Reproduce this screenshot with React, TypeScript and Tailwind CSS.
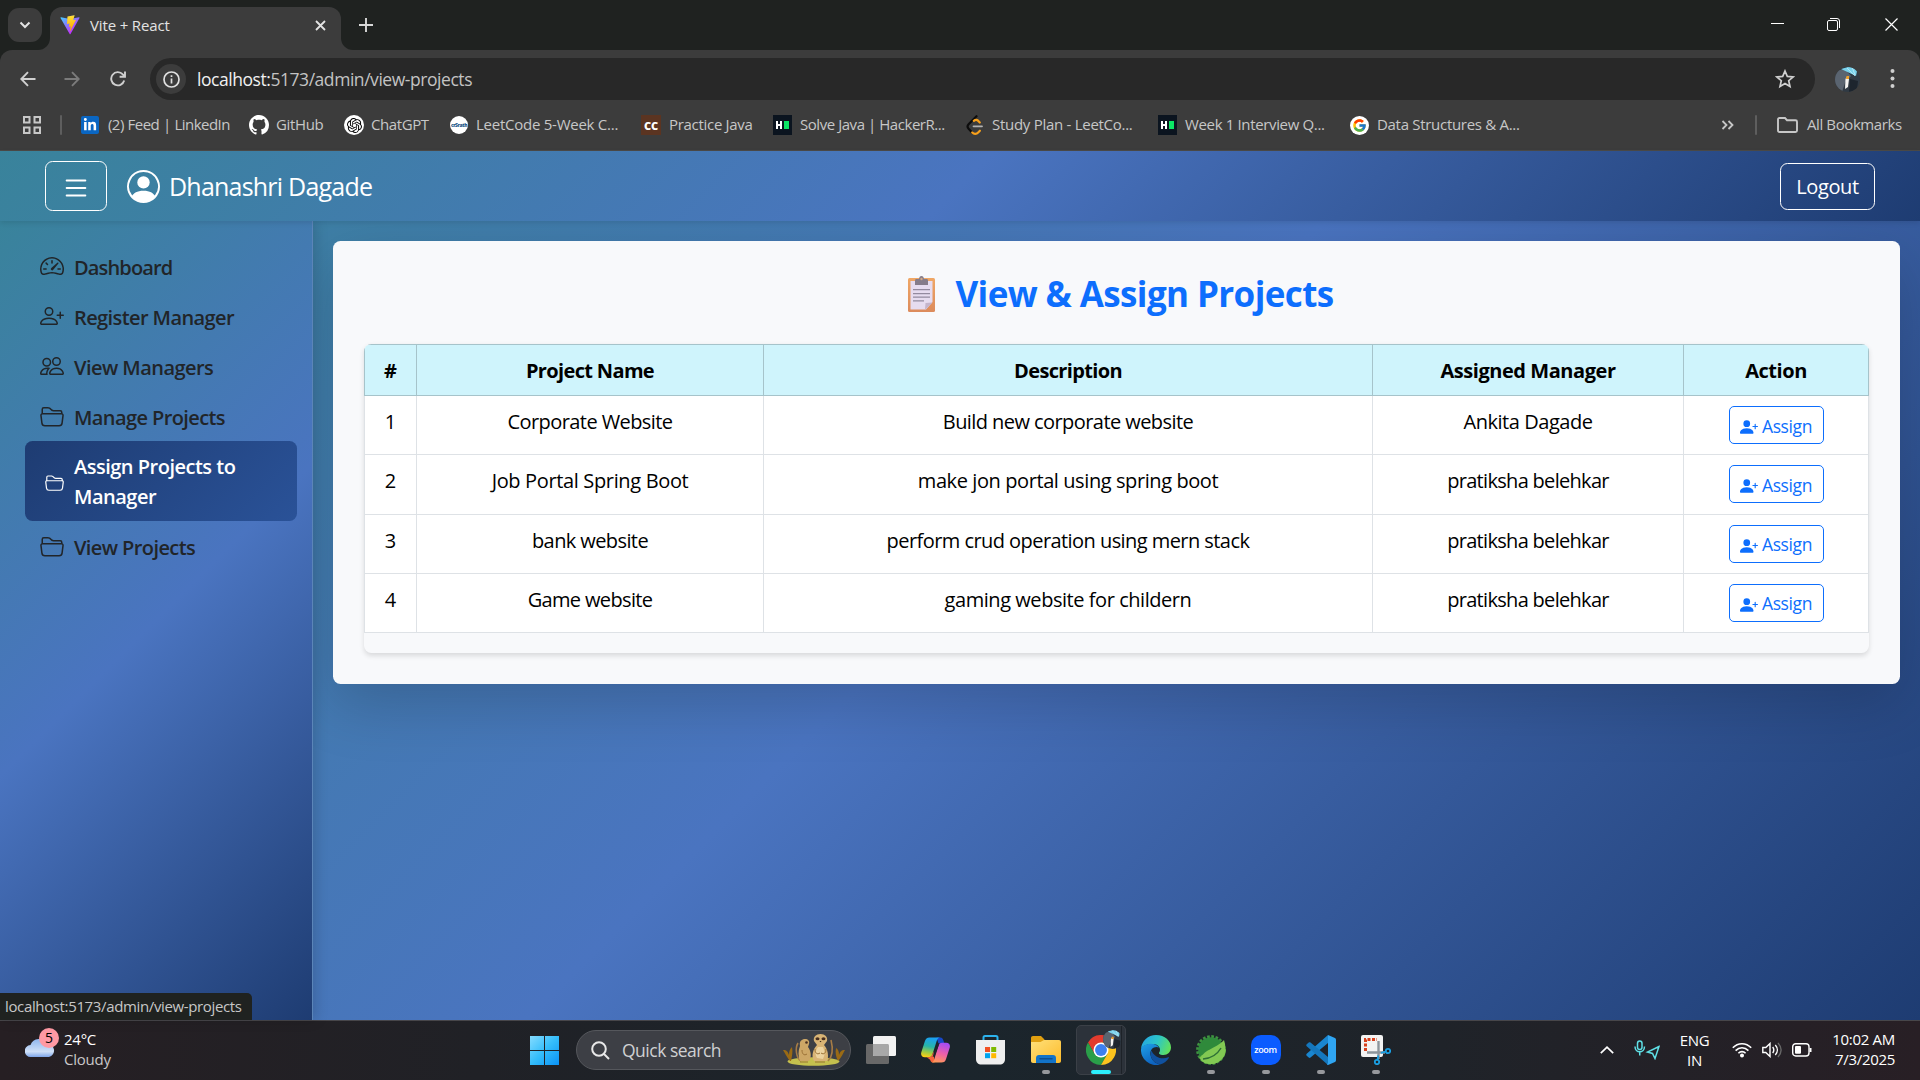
import React from "react";
import {
  BsFolder2Open,
  BsGithub,
  BsList,
  BsPeople,
  BsPersonCircle,
  BsPersonPlus,
  BsPersonPlusFill,
  BsSpeedometer2,
} from "react-icons/bs";
import { SiOpenai } from "react-icons/si";
import { FcGoogle } from "react-icons/fc";
import { FaLinkedinIn } from "react-icons/fa";

/* ---------- Browser chrome ---------- */

function ViteLogo() {
  return (
    <svg viewBox="0 0 410 404" className="h-5 w-5 shrink-0">
      <defs>
        <linearGradient id="va" x1="6" y1="33" x2="235" y2="344" gradientUnits="userSpaceOnUse">
          <stop stopColor="#41D1FF" />
          <stop offset="1" stopColor="#BD34FE" />
        </linearGradient>
        <linearGradient id="vb" x1="194" y1="9" x2="236" y2="293" gradientUnits="userSpaceOnUse">
          <stop stopColor="#FFEA83" />
          <stop offset=".08" stopColor="#FFDD35" />
          <stop offset="1" stopColor="#FFA800" />
        </linearGradient>
      </defs>
      <path fill="url(#va)" d="M399.6 59.5 215.6 388.5c-3.8 6.8-13.5 6.8-17.3.1L10.6 59.6c-4.1-7.3 2-16.1 10.3-14.6l184.2 32.9c1.2.2 2.4.2 3.5 0l180.3-32.8c8.2-1.5 14.5 7.2 10.7 14.4z" />
      <path fill="url(#vb)" d="M293 1.6 156.800 28.300c-2.200.4-3.900 2.300-4 4.600l-8.400 141.400c-.2 3.300 2.900 5.900 6.100 5.200l37.900-8.700c3.500-.8 6.700 2.300 6 5.900l-11.300 55.100c-.8 3.700 2.700 6.900 6.300 5.800l23.400-7.100c3.600-1.100 7.100 2.100 6.300 5.800l-17.900 86.600c-1.100 5.400 6.100 8.400 9.100 3.700l2-3.100 110.900-221.400c1.900-3.700-1.300-7.900-5.400-7.100l-39 7.500c-3.700.7-6.800-2.700-5.800-6.300L298.700 7.900C299.700 4.300 296.600.9 293 1.600z" />
    </svg>
  );
}

function Avatar({ className }: { className: string }) {
  return (
    <svg viewBox="0 0 25 25" className={className}>
      <defs>
        <clipPath id="avc">
          <circle cx="12.500" cy="12.500" r="12.500" />
        </clipPath>
      </defs>
      <g clipPath="url(#avc)">
        <rect width="25" height="25" fill="#303a44" />
        <path d="M0 4 10 2l6 7-6 7-3 9H0z" fill="#5a6470" />
        <path d="M6 2 13 0h7l2 4-1 5z" fill="#79d2ec" />
        <path d="m12 1 8 8M17 0l3 8" stroke="#c8f0fa" strokeWidth=".7" />
        <path d="m15 12 8 2-1 9-8 2z" fill="#1d252e" />
        <path d="M10.500 12c1-2.500 2.500-2.500 3.500 0l-1 8-3 2z" fill="#f4f4f2" />
        <path d="M11.500 9h2.500v3h-3z" fill="#efa12a" />
      </g>
    </svg>
  );
}

function HackerRank() {
  return (
    <span className="flex h-5 w-[19px] items-center justify-center bg-[#0b141f]">
      <svg viewBox="0 0 14 8" className="h-2 w-3.5">
        <path d="M1 0v8M5 0v8M1 4h4" stroke="#fff" strokeWidth="2" />
        <rect x="8" width="5" height="8" fill="#0be564" />
      </svg>
    </span>
  );
}

function LeetCode() {
  return (
    <svg viewBox="0 0 18 20" className="h-5 w-[18px]" fill="none" strokeWidth="2.200" strokeLinecap="round">
      <path d="M10.500 1.200 2.600 9.300c-1.300 1.400-1.300 3.100 0 4.500l3.500 3.700" stroke="#0c0c0c" />
      <path d="M7.800 5.800c1.500-1.300 3.200-1.200 4.500.1l1.500 1.600M6.200 17.500c1.900 1.800 4.300 1.700 6-.1l1.700-1.700" stroke="#f9a11b" />
      <path d="M7.500 11.300H16" stroke="#b3b3b3" strokeWidth="1.800" />
    </svg>
  );
}

const bookmarks: { label: string; slot: string; text: string; icon: React.ReactNode }[] = [
  {
    label: "(2) Feed | LinkedIn",
    slot: "w-[168px]",
    text: "-ml-px tracking-[-0.55px] [word-spacing:0.5px]",
    icon: (
      <span className="flex h-[18px] w-[18px] items-center justify-center rounded-[2px] bg-[#0a66c2] text-white">
        <FaLinkedinIn size={14} />
      </span>
    ),
  },
  { label: "GitHub", slot: "w-[95px]", text: "-ml-px tracking-[-0.35px]", icon: <BsGithub size={20} color="#fff" /> },
  {
    label: "ChatGPT",
    slot: "w-[105px]",
    text: "-ml-px tracking-[-0.4px]",
    icon: (
      <span className="flex h-5 w-5 items-center justify-center rounded-full bg-white text-black">
        <SiOpenai size={15} />
      </span>
    ),
  },
  {
    label: "LeetCode 5-Week C...",
    slot: "w-[192px]",
    text: "-ml-px tracking-[-0.25px]",
    icon: (
      <span className="ml-px flex h-[18px] w-[18px] items-center justify-center overflow-hidden rounded-full bg-white">
        <span className="text-[5px] leading-none font-extrabold tracking-[-0.4px] text-[#1b5488]">crSrath</span>
      </span>
    ),
  },
  {
    label: "Practice Java",
    slot: "w-[132px]",
    text: "tracking-[-0.3px]",
    icon: (
      <span className="flex h-5 w-5 items-center justify-center bg-[#5b3421]">
        <span className="text-[11px] leading-none font-extrabold tracking-[-0.2px] text-white">CC</span>
      </span>
    ),
  },
  { label: "Solve Java | HackerR...", slot: "w-[193px]", text: "-ml-px tracking-[-0.45px]", icon: <HackerRank /> },
  { label: "Study Plan - LeetCo...", slot: "w-[192px]", text: "-ml-[2px] tracking-[-0.28px]", icon: <LeetCode /> },
  { label: "Week 1 Interview Q...", slot: "w-[192px]", text: "-ml-px tracking-[-0.35px]", icon: <HackerRank /> },
  {
    label: "Data Structures & A...",
    slot: "w-[190px]",
    text: "-ml-px tracking-[-0.3px]",
    icon: (
      <span className="flex h-[19px] w-[19px] items-center justify-center rounded-full bg-white">
        <FcGoogle size={15} />
      </span>
    ),
  },
];

function Chrome() {
  return (
    <header className="flex h-[151px] shrink-0 flex-col border-b border-[#4b4a48] bg-[#3c3c3c]">
      <div className="flex h-[50px] bg-[#3c3c3c]">
        <div className="flex h-[50px] w-[50px] items-center rounded-br-xl bg-[#1f2220] pl-2">
          <span className="flex h-[34px] w-[34px] items-center justify-center rounded-[11px] bg-[#3c3c3c]">
            <svg viewBox="0 0 12 8" className="h-2 w-3" fill="none" stroke="#e3e3e3" strokeWidth="2">
              <path d="m1.500 1.500 4.500 4.500 4.500-4.500" />
            </svg>
          </span>
        </div>
        <div className="flex w-[291px] bg-[#1f2220] pt-[7px]">
          <div className="flex h-[43px] w-full items-center rounded-t-xl bg-[#3c3c3c] pr-[15px] pb-[7px] pl-2.5">
            <ViteLogo />
            <span className="ml-2.5 flex-1 text-[15px] tracking-[-0.15px] text-[#e3e3e3]">Vite + React</span>
            <svg viewBox="0 0 11 11" className="h-[11px] w-[11px]" stroke="#e3e3e3" strokeWidth="1.800">
              <path d="m1 1 9 9M10 1l-9 9" />
            </svg>
          </div>
        </div>
        <div className="flex flex-1 items-center rounded-bl-xl bg-[#1f2220] pr-[22px] pb-[1px] pl-[18px]">
          <svg viewBox="0 0 14 14" className="h-3.5 w-3.5" stroke="#d8d8d8" strokeWidth="1.900">
            <path d="M7 0v14M0 7h14" />
          </svg>
          <div className="ml-auto flex items-center">
            <svg viewBox="0 0 13 13" className="h-[13px] w-[13px]">
              <path d="M0 5.500h13" stroke="#fff" />
            </svg>
            <svg viewBox="0 0 13 13" className="mr-[45px] ml-[43px] h-[13px] w-[13px]" fill="none" stroke="#fff">
              <rect x=".5" y="2.500" width="10" height="10" rx="1.500" />
              <path d="M3 .5h7a2.500 2.500 0 0 1 2.500 2.500v7" />
            </svg>
            <svg viewBox="0 0 13 13" className="h-[13px] w-[13px]" stroke="#fff" strokeWidth="1.200">
              <path d="m.5.5 12 12M12.500.5l-12 12" />
            </svg>
          </div>
        </div>
      </div>

      <div className="bg-[#1f2220]">
        <div className="flex h-[58px] items-center rounded-t-xl bg-[#3c3c3c] pr-[22px] pl-5">
          <svg viewBox="0 0 16 16" className="h-4 w-4" fill="none" stroke="#d0d0d0" strokeWidth="1.900">
            <path d="M15.500 8H1.500M8 1.200 1.300 8 8 14.800" />
          </svg>
          <svg viewBox="0 0 16 16" className="ml-[28px] h-4 w-4" fill="none" stroke="#7b7b7b" strokeWidth="1.900">
            <path d="M.5 8h14M8 1.200 14.700 8 8 14.800" />
          </svg>
          <svg viewBox="0 0 16 16" className="ml-[30px] h-4 w-4" fill="none" stroke="#d0d0d0" strokeWidth="1.900">
            <path d="M14.200 9.500A6.600 6.600 0 1 1 12.800 3.400L14.800 5.500M15 .5v5.200H9.600" />
          </svg>
          <div className="ml-[24px] flex h-[42px] w-[1665px] items-center rounded-full bg-[#282828] pr-[20px] pl-[6px]">
            <span className="flex h-[30px] w-[30px] items-center justify-center rounded-full bg-[#3c3c3c]">
              <svg viewBox="0 0 17 17" className="h-[17px] w-[17px]" fill="none" stroke="#e0e0e0" strokeWidth="1.700">
                <circle cx="8.500" cy="8.500" r="7.500" />
                <path d="M8.500 7.500v5M8.500 4.300v1.800" />
              </svg>
            </span>
            <span className="ml-[11px] text-[17.5px] tracking-[-0.45px] text-[#c3c3c3]">
              <span className="text-[#f1f1f1]">localhost:</span>5173/admin/view-projects
            </span>
            <svg viewBox="0 0 20 20" className="ml-auto h-5 w-5" fill="none" stroke="#d0d0d0" strokeWidth="1.700">
              <path d="m10 2 2.300 5.400 5.800.5-4.400 3.800 1.300 5.700L10 14.400l-5 3 1.300-5.700L1.900 7.900l5.800-.5z" />
            </svg>
          </div>
          <Avatar className="ml-5 h-[25px] w-[25px]" />
          <svg viewBox="0 0 5 20" className="mr-[3px] ml-auto h-5 w-[5px]" fill="#d0d0d0">
            <circle cx="2.500" cy="2" r="2" />
            <circle cx="2.500" cy="9.500" r="2" />
            <circle cx="2.500" cy="17" r="2" />
          </svg>
        </div>
      </div>

      <div className="flex h-[34px] items-center pr-[18px] pl-[23px] text-[15px] text-[#c7c7c7]">
        <svg viewBox="0 0 18 18" className="h-[18px] w-[18px]" fill="none" stroke="#c7c7c7" strokeWidth="2">
          <rect x="1" y="1" width="5.500" height="5.500" />
          <rect x="11.500" y="1" width="5.500" height="5.500" />
          <rect x="1" y="11.500" width="5.500" height="5.500" />
          <rect x="11.500" y="11.500" width="5.500" height="5.500" />
        </svg>
        <span className="mr-[19px] ml-[19px] h-5 w-0.5 rounded bg-[#5e5e5e]" />
        {bookmarks.map((b) => (
          <div key={b.label} className={"flex shrink-0 items-center whitespace-nowrap " + b.slot}>
            <span className="flex w-7 shrink-0">{b.icon}</span>
            <span className={"pb-0.5 " + b.text}>{b.label}</span>
          </div>
        ))}
        <svg viewBox="0 0 13 10" className="ml-auto h-2.5 w-[13px]" fill="none" stroke="#c7c7c7" strokeWidth="1.800">
          <path d="m1.500 1 4 4-4 4M7.500 1l4 4-4 4" />
        </svg>
        <span className="mr-[20px] ml-[21px] h-5 w-0.5 rounded bg-[#5e5e5e]" />
        <svg viewBox="0 0 21 16" className="h-4 w-[21px]" fill="none" stroke="#c7c7c7" strokeWidth="1.900">
          <path d="M1 2.500C1 1.600 1.600 1 2.500 1H8l2 2.200h8.500c.9 0 1.500.6 1.500 1.500v8.800c0 .9-.6 1.500-1.500 1.500h-16C1.600 15 1 14.400 1 13.500z" />
        </svg>
        <span className="ml-[9px] w-[95px] pb-0.5 tracking-[-0.4px] whitespace-nowrap">All Bookmarks</span>
      </div>
    </header>
  );
}

/* ---------- Web page ---------- */

function Navbar() {
  return (
    <nav className="z-10 flex h-[70px] shrink-0 items-center bg-[linear-gradient(135deg,#39839b_0%,#4a74c0_50%,#1e3c72_100%)] pr-[45px] pl-[45px] text-white shadow-[0_2px_5px_rgba(0,0,0,0.1)]">
      <button className="flex h-[50px] w-[62px] items-center justify-center rounded-[7.5px] border border-white">
        <BsList size={30} className="mt-1" />
      </button>
      <BsPersonCircle size={33} className="ml-5" />
      <span className="ml-[9px] text-[25px] leading-[38px] tracking-[-0.78px]">Dhanashri Dagade</span>
      <button className="mt-px ml-auto flex h-[47px] w-[95px] items-center justify-center rounded-[7.5px] border border-white pt-px text-[20px] tracking-[-0.4px]">
        Logout
      </button>
    </nav>
  );
}

const menu = [
  { label: "Dashboard", Icon: BsSpeedometer2, text: "tracking-[-0.85px]" },
  { label: "Register Manager", Icon: BsPersonPlus, text: "tracking-[-0.6px]" },
  { label: "View Managers", Icon: BsPeople, text: "tracking-[-0.55px]" },
  { label: "Manage Projects", Icon: BsFolder2Open, text: "tracking-[-0.6px]" },
  { label: "Assign Projects to Manager", Icon: BsFolder2Open, text: "tracking-[-0.5px]", active: true },
  { label: "View Projects", Icon: BsFolder2Open, text: "tracking-[-0.6px]" },
];

function Sidebar() {
  return (
    <aside className="z-[5] flex w-[313px] shrink-0 flex-col border-r border-[#5b85b8] bg-[linear-gradient(135deg,#39839b_0%,#4a74c0_50%,#1e3c72_100%)] px-[25px] pt-5 shadow-[3px_0_12px_rgba(0,0,0,0.15)]">
      {menu.map(({ label, Icon, text, active }) =>
        active ? (
          <div key={label} className="flex w-[272px] items-center rounded-[7.5px] bg-[linear-gradient(135deg,#1e3c72,#2a5298)] pt-[11px] pr-4 pb-[9px] pl-5 text-white">
            <Icon size={19} className="mr-[10px] shrink-0" />
            <span className={"w-[190px] text-[20px] leading-[30px] font-semibold " + text}>{label}</span>
          </div>
        ) : (
          <div key={label} className="flex h-[50px] items-center pl-[15px] text-[#212529]">
            <Icon size={24} className="mr-[10px] shrink-0" />
            <span className={"pt-[3px] text-[20px] leading-[30px] font-semibold whitespace-nowrap " + text}>{label}</span>
          </div>
        ),
      )}
    </aside>
  );
}

function Clipboard() {
  return (
    <svg viewBox="0 0 27 36" className="h-9 w-[27px]">
      <defs>
        <linearGradient id="cb" x1="0" y1="0" x2="0" y2="1">
          <stop stopColor="#f0a765" />
          <stop offset="1" stopColor="#dc8b5c" />
        </linearGradient>
      </defs>
      <rect y="2" width="27" height="34" rx="1.500" fill="url(#cb)" />
      <path d="M2.500 5h22v21l-6.500 7.500H2.500z" fill="#e6dcf0" />
      <path d="M24.500 26.500 17.500 27l-.5 6.500h.5z" fill="#c4b4cb" />
      <path d="M7 4.500c0-1 .6-1.500 1.500-1.500H11c.3-2 1-3 2.500-3S15.700 1 16 3h2.500c.9 0 1.500.5 1.500 1.500V9H7z" fill="#857c8b" />
      <circle cx="13.500" cy="3" r="1.200" fill="#cfa887" />
      <path d="M5 13.700h17M5 17.700h17M5 21.200h17M5 24.800h11" stroke="#938a9f" strokeWidth="1.200" />
    </svg>
  );
}

const columns = [
  { title: "#", text: "" },
  { title: "Project Name", text: "tracking-[-0.65px]" },
  { title: "Description", text: "tracking-[-0.65px]" },
  { title: "Assigned Manager", text: "tracking-[-0.45px]" },
  { title: "Action", text: "tracking-[-0.45px]" },
];

const projects = [
  {
    name: "Corporate Website",
    nameText: "tracking-[-0.58px]",
    description: "Build new corporate website",
    descriptionText: "tracking-[-0.57px]",
    manager: "Ankita Dagade",
    managerText: "tracking-[-0.45px]",
  },
  {
    name: "Job Portal Spring Boot",
    nameText: "tracking-[-0.35px]",
    description: "make jon portal using spring boot",
    descriptionText: "tracking-[-0.41px]",
    manager: "pratiksha belehkar",
    managerText: "tracking-[-0.69px]",
  },
  {
    name: "bank website",
    nameText: "tracking-[-0.6px]",
    description: "perform crud operation using mern stack",
    descriptionText: "tracking-[-0.56px]",
    manager: "pratiksha belehkar",
    managerText: "tracking-[-0.69px]",
  },
  {
    name: "Game website",
    nameText: "tracking-[-0.65px]",
    description: "gaming website for childern",
    descriptionText: "tracking-[-0.45px]",
    manager: "pratiksha belehkar",
    managerText: "tracking-[-0.69px]",
  },
];

function Projects() {
  return (
    <section className="flex h-[443px] flex-col rounded-[7.5px] bg-[#f8f9fb] px-[30px] pt-[30px] shadow-[0_20px_60px_rgba(0,0,0,0.175)]">
      <h2 className="flex h-[46px] items-center justify-center gap-[20px] pl-[9px] text-[35px] font-bold tracking-[-0.61px] text-[#0d6efd]">
        <Clipboard />
        View &amp; Assign Projects
      </h2>
      <div className="mx-px mt-[27px] h-[309px] overflow-hidden rounded-[7.5px] shadow-[0_2.500px_5px_rgba(0,0,0,0.12)]">
        <table className="w-full table-fixed border-collapse text-center text-[20px] leading-[30px] text-black">
          <colgroup>
            <col className="w-[52px]" />
            <col className="w-[347px]" />
            <col className="w-[609px]" />
            <col className="w-[311px]" />
            <col />
          </colgroup>
          <thead>
            <tr className="h-[51px] bg-[#cff4fc]">
              {columns.map((c) => (
                <th key={c.title} className={"border border-[#a6c3ca] pt-0.5 font-bold " + c.text}>
                  {c.title}
                </th>
              ))}
            </tr>
          </thead>
          <tbody>
            {projects.map((row, i) => (
              <tr key={i} className="h-[59.3px] bg-white align-top">
                <td className="border border-[#dee2e6] pt-[11px]">{i + 1}</td>
                <td className={"border border-[#dee2e6] pt-[11px] " + row.nameText}>{row.name}</td>
                <td className={"border border-[#dee2e6] pt-[11px] " + row.descriptionText}>{row.description}</td>
                <td className={"border border-[#dee2e6] pt-[11px] " + row.managerText}>{row.manager}</td>
                <td className="border border-[#dee2e6] pt-[10px]">
                  <button className="mx-auto flex h-[38px] w-[95px] items-center justify-center gap-1 rounded-[5px] border border-[#0d6efd] pt-px text-[17.5px] tracking-[-0.4px] text-[#0d6efd]">
                    <BsPersonPlusFill size={18} className="mt-[3px]" />
                    Assign
                  </button>
                </td>
              </tr>
            ))}
          </tbody>
        </table>
      </div>
    </section>
  );
}

/* ---------- Taskbar ---------- */

function Meerkats() {
  return (
    <svg viewBox="0 0 62 32" className="ml-auto h-8 w-[62px]">
      <ellipse cx="30.500" cy="27.500" rx="26" ry="4.300" fill="#c5c04e" />
      <path d="M7 27C3 22 2 19 0 16c4 0 5 2 6 5 0-4 1-6 3-8 1 5 0 9-1 14zM55 27c4-4 5-8 7-11-4 0-5 2-6 5 0-4-1-6-3-7-1 5 0 9 2 13z" fill="#9a6a14" />
      <path d="M18 27c-5-3-6-13-3-18M45 27c5-5 5-13 3-21" stroke="#a67c46" strokeWidth="1.600" fill="none" />
      <path d="M17 12c-1-5 2-7 5-7s5 2 4 5l-1 3c3 4 4 10 1 14h-9c-2-5-2-10 0-15z" fill="#cda766" />
      <path d="M31 7c-1-4 2-7 6.500-7S45 3 44 7l-3 4c4 4 5 12 3 16H31c-3-5-1-12 3-16z" fill="#d9b475" />
      <path d="M35 13c-3 4-3 8-1 11l6 1c2-4 2-8 0-12z" fill="#ecd3a0" />
      <ellipse cx="34.500" cy="4.800" rx="2" ry="1.500" fill="#4a3020" />
      <ellipse cx="40.500" cy="4.800" rx="2" ry="1.500" fill="#4a3020" />
      <circle cx="23.500" cy="8.500" r="1.300" fill="#4a3020" />
      <path d="M36.500 7h2l-1 1.300z" fill="#2e1d12" />
      <path d="M32 15c0 4 2 6 5 4M43 15c0 4-2 6-5 4M19 16c0 4 2 6 5 4M17 28h8M32 28h10" stroke="#9b7236" fill="none" />
    </svg>
  );
}

function Copilot() {
  return (
    <svg viewBox="0 0 30 26" className="h-[26px] w-[29px]">
      <defs>
        <linearGradient id="cpa" x1=".5" y1="0" x2=".3" y2="1">
          <stop stopColor="#1aa0f5" />
          <stop offset=".45" stopColor="#27b5a8" />
          <stop offset=".75" stopColor="#9ccb45" />
          <stop offset="1" stopColor="#ffd012" />
        </linearGradient>
        <linearGradient id="cpb" x1=".6" y1="0" x2=".3" y2="1">
          <stop stopColor="#a64cf2" />
          <stop offset=".5" stopColor="#ee5faa" />
          <stop offset="1" stopColor="#ff9a55" />
        </linearGradient>
      </defs>
      <path d="M16 0h4c2 0 2.800 1.500 3.500 4l.6 2H18z" fill="#1847c8" />
      <path d="M9 0h11c-2 0-3 1.300-3.700 3.500L12 17c-.6 2.300-1.500 3.500-4 3.500H4C.5 20.500-.5 18 .4 15L4 4c.8-2.600 2-4 5-4z" fill="url(#cpa)" />
      <path d="M6 20.500h2c2.500 0 3.400-1.200 4-3.500l.8-2.500 1.200 11.500H13c-2 0-3-1-3.600-3z" fill="#f7633b" />
      <path d="M21 26H10c2 0 3-1.300 3.700-3.500L18 9c.6-2.300 1.500-3.500 4-3.500h4c3.500 0 4.500 2.500 3.600 5.500L26 22c-.8 2.600-2 4-5 4z" fill="url(#cpb)" />
      <path d="m16.500 7.500 2.300-.8-4.800 12.800-2 .8z" fill="#20242c" />
    </svg>
  );
}

function Store() {
  return (
    <svg viewBox="0 0 30 30" className="h-[30px] w-[30px]">
      <path d="M7.500 6V2.500C7.500 1.600 8 1 9 1h11c1 0 1.500.6 1.500 1.500V6" fill="none" stroke="#2cb3ee" strokeWidth="2" />
      <path d="M0 5h29v19c0 3.500-2 5.500-5.500 5.500h-18C2 29.500 0 27.500 0 24z" fill="#efefef" />
      <path d="M9 12h5v5H9z" fill="#f25022" />
      <path d="M15.200 12h5v5h-5z" fill="#7fba00" />
      <path d="M9 18.200h5v5H9z" fill="#00a4ef" />
      <path d="M15.200 18.200h5v5h-5z" fill="#ffb900" />
    </svg>
  );
}

function Explorer() {
  return (
    <svg viewBox="0 0 30 28" className="h-7 w-[30px]">
      <defs>
        <linearGradient id="ex" x1="0" y1="0" x2="1" y2="1">
          <stop stopColor="#ffe07a" />
          <stop offset="1" stopColor="#fdbb2a" />
        </linearGradient>
      </defs>
      <path d="M0 2C0 .8.800 0 2 0h8l3.500 3.500L12 8H0z" fill="#e09f10" />
      <path d="M0 6h9.500L13 4h15c1.200 0 2 .8 2 2v19c0 1.200-.8 2-2 2H2c-1.200 0-2-.8-2-2z" fill="url(#ex)" />
      <path d="M5 27v-5c0-1.800 1.200-3 3-3h14c1.800 0 3 1.200 3 3v5z" fill="#1273c8" />
      <path d="M9 22.800h12" stroke="#0c4f92" strokeWidth="1.500" strokeLinecap="round" />
    </svg>
  );
}

function ChromeLogo() {
  return (
    <svg viewBox="0 0 48 48" className="h-[30px] w-[30px]">
      <path d="M3.200 12A24 24 0 0 1 44.800 12H24L13.600 30z" fill="#e33b2e" />
      <path d="M3.200 12 13.600 30H34.400L24 48A24 24 0 0 1 3.200 12z" fill="#2a9e49" />
      <path d="M24 12h20.800A24 24 0 0 1 24 48l10.400-18z" fill="#fcc31e" />
      <circle cx="24" cy="24" r="12" fill="#fff" />
      <circle cx="24" cy="24" r="9.500" fill="#3c80ef" />
    </svg>
  );
}

function Edge() {
  return (
    <svg viewBox="0 0 30 30" className="h-[30px] w-[30px]">
      <defs>
        <linearGradient id="ea" x1="0" y1=".3" x2="1" y2=".6">
          <stop stopColor="#25a6e4" />
          <stop offset=".5" stopColor="#2cc5c8" />
          <stop offset="1" stopColor="#62e15a" />
        </linearGradient>
        <linearGradient id="eb" x1="0" y1="0" x2=".5" y2="1">
          <stop stopColor="#1fa1e8" />
          <stop offset="1" stopColor="#0d62bf" />
        </linearGradient>
      </defs>
      <path d="M0 14C.7 6 7 0 15 0c9 0 15 6 15 12.500 0 4.500-3.500 7.500-7.500 7.500-4 0-5-1.600-4.300-2.500 2.500-3.500-.6-8.500-6.200-8.500C6 9 1 11 0 14z" fill="url(#ea)" />
      <path d="M0 14C1 11 5 8.800 10 8.800c3.500 0 6.500 1.500 8 3.700-5-2-9.500 2-8.500 7.500.8 5 5 8.600 9.500 9.400A15 15 0 0 1 0 14z" fill="url(#eb)" />
      <path d="M10.500 15.500C8 20 11 28 19 29.400c4-1 7-3.400 9-6.700.2-.5-.2-.7-.7-.4-5.500 2.500-13.800.7-16.800-6.800z" fill="#10519f" />
    </svg>
  );
}

function Spring() {
  return (
    <svg viewBox="0 0 30 30" className="h-[30px] w-[30px]">
      <circle cx="15" cy="15" r="13.200" fill="none" stroke="#3f9440" strokeWidth="3.400" strokeDasharray="2.600 1.540" />
      <circle cx="15" cy="15" r="12.800" fill="#2f8a3b" />
      <path d="M30 14a15 15 0 0 1-27 9l3-3z" fill="#7cc54a" />
      <path d="M5 25C6 14 19 15 28 5c4 12-1 23-12 24-5 .5-9-1-11-4z" fill="#82c953" />
      <path d="M7 24c7-.5 14-4 18-11" fill="none" stroke="#2d6f36" strokeWidth="1.500" />
    </svg>
  );
}

function Zoom() {
  return (
    <span className="flex h-[30px] w-[30px] items-center justify-center rounded-[10px] bg-[#0b5cff]">
      <span className="pb-[2px] text-[9px] leading-none font-semibold tracking-[-0.4px] text-white">zoom</span>
    </span>
  );
}

function VsCode() {
  return (
    <svg viewBox="0 0 30 30" className="h-[30px] w-[30px]">
      <path d="M22 0v8L4.500 22.500c-.6.5-1.300.5-1.800 0L.7 20.700c-.6-.6-.6-1.300 0-1.900z" fill="#1a86d0" />
      <path d="M22 30v-8L4.500 7.500c-.6-.5-1.300-.5-1.800 0L.7 9.300c-.6.6-.6 1.300 0 1.900z" fill="#1577bd" />
      <path d="M22 0 29 3c.7.4 1 .9 1 1.700v20.600c0 .8-.3 1.300-1 1.700l-7 3c-1 .2-1-1 0-2z" fill="#2fa5f2" />
    </svg>
  );
}

function Snip() {
  return (
    <svg viewBox="0 0 30 30" className="h-[30px] w-[30px]">
      <rect width="22" height="22" rx="2" fill="#f3f3f3" />
      <path d="M4.500 16V4.500H16" fill="none" stroke="#d8401c" strokeWidth="3" strokeDasharray="3 1.500" />
      <path d="M17.500 6v18M6 17.500h18" stroke="#8d959c" strokeWidth="2.400" />
      <circle cx="27" cy="16" r="2.200" fill="none" stroke="#1a9fe3" strokeWidth="1.800" />
      <circle cx="16" cy="27" r="2.200" fill="none" stroke="#1a9fe3" strokeWidth="1.800" />
      <path d="m20 17.800 5-1.300M17.300 20.500l-.8 4.500" stroke="#1a9fe3" strokeWidth="1.800" />
    </svg>
  );
}

function TaskView() {
  return (
    <svg viewBox="0 0 30 28" className="h-7 w-[30px]">
      <rect y="8" width="23" height="20" rx="1.500" fill="#686868" />
      <rect x="7" width="23" height="20" rx="1.500" fill="#f2f2f2" />
      <path d="M7 8h14.500c.9 0 1.500.6 1.500 1.500V20H8.500C7.600 20 7 19.400 7 18.500z" fill="#a8a8a8" />
    </svg>
  );
}

const apps: { name: string; icon: React.ReactNode; state?: "open" | "active" }[] = [
  { name: "task-view", icon: <TaskView /> },
  { name: "copilot", icon: <Copilot /> },
  { name: "store", icon: <Store /> },
  { name: "explorer", icon: <Explorer />, state: "open" },
  { name: "chrome", icon: <ChromeLogo />, state: "active" },
  { name: "edge", icon: <Edge /> },
  { name: "spring", icon: <Spring />, state: "open" },
  { name: "zoom", icon: <Zoom />, state: "open" },
  { name: "vscode", icon: <VsCode />, state: "open" },
  { name: "snip", icon: <Snip />, state: "open" },
];

function Taskbar() {
  return (
    <footer className="flex h-[60px] shrink-0 border-t border-[#47464a] bg-[linear-gradient(90deg,#261f23_0%,#202126_25%,#1b252c_50%,#1f2329_75%,#281f25_100%)] text-[15px] leading-5 text-white">
      <div className="flex w-[530px] pl-[25px]">
        <div className="relative mt-4 h-6 w-[39px]">
          <svg viewBox="0 0 30 20" className="h-5 w-[30px]">
            <defs>
              <linearGradient id="cl" x1="0" y1="0" x2="0" y2="1">
                <stop stopColor="#8fb6ee" />
                <stop offset=".7" stopColor="#cfe0f8" />
                <stop offset="1" stopColor="#7ea6ea" />
              </linearGradient>
            </defs>
            <path d="M6 20a6 6 0 0 1-.5-12A9 9 0 0 1 22 7a6.600 6.600 0 0 1 2 13z" fill="url(#cl)" />
          </svg>
          <span className="absolute -top-[9px] left-[14px] flex h-5 w-5 items-center justify-center rounded-full bg-[#ff99a4] text-[14px] text-black">5</span>
        </div>
        <div className="flex flex-col pt-2 tracking-[-0.25px]">
          <span>24°C</span>
          <span className="text-[#c9c7c9]">Cloudy</span>
        </div>
      </div>
      <svg viewBox="0 0 29 29" className="mt-[15px] h-[29px] w-[29px]">
        <defs>
          <linearGradient id="win" x1="0" y1="0" x2="1" y2="1">
            <stop stopColor="#85dcff" />
            <stop offset=".5" stopColor="#34bdfb" />
            <stop offset="1" stopColor="#0a92f5" />
          </linearGradient>
        </defs>
        <path d="M0 0h14v14H0zM15 0h14v14H15zM0 15h14v14H0zM15 15h14v14H15z" fill="url(#win)" />
      </svg>
      <div className="mt-[9px] ml-[17px] flex h-10 w-[275px] items-center rounded-full border border-[#55575c] bg-[#3d3f45] pr-[5px] pl-3.5">
        <svg viewBox="0 0 19 19" className="h-[19px] w-[19px]" fill="none" stroke="#e8e8e8" strokeWidth="2">
          <circle cx="8" cy="8" r="6.800" />
          <path d="m13 13 5 5" />
        </svg>
        <span className="ml-3 text-[17.5px] tracking-[-0.5px] text-[#cfd0d2]">Quick search</span>
        <Meerkats />
      </div>
      <div className="ml-[2px] flex">
        {apps.map((a) => (
          <div
            key={a.name}
            className={
              a.state === "active"
                ? "relative mx-[2.5px] mt-1 flex h-[50px] w-[50px] flex-col items-center rounded-[5px] border border-[#3b4047] bg-[#2c323a]"
                : "relative mx-[2.5px] mt-1 flex h-[50px] w-[50px] flex-col items-center"
            }
          >
            <div className={a.state === "active" ? "mt-[9px] flex h-[30px] items-center" : "mt-[10px] flex h-[30px] items-center"}>{a.icon}</div>
            {a.state === "active" && (
              <>
                <Avatar className="absolute top-1 left-[26px] h-[19px] w-[19px]" />
                <span className="absolute -right-px top-0 h-full w-[5px] rounded-r-[5px] border-l border-[#1d2228]" />
              </>
            )}
            {a.state && (
              <span
                className={
                  a.state === "active"
                    ? "absolute bottom-0 h-1 w-5 rounded-full bg-[#2ceefc]"
                    : "absolute bottom-px h-1 w-2 rounded-full bg-[#96989c]"
                }
              />
            )}
          </div>
        ))}
      </div>
      <div className="ml-auto flex pr-[25px] tracking-[-0.3px]">
        <svg viewBox="0 0 14 8" className="mt-[25px] h-2 w-3.5" fill="none" stroke="#fff" strokeWidth="1.700">
          <path d="m.8 7.200 6.200-6 6.200 6" />
        </svg>
        <svg viewBox="0 0 26 20" className="mt-[19px] ml-[20px] h-5 w-[26px]" fill="none" stroke="#5fe0e6" strokeWidth="1.500">
          <rect x="3.500" y="1" width="4.500" height="8.500" rx="2.250" />
          <path d="M1 6.500c0 7 9.500 7 9.500 0M5.750 12v3.500M25 6.500 13.500 12l5 1.500 2.500 5z" />
        </svg>
        <div className="mt-[9px] ml-[19px] flex w-[31px] flex-col items-center">
          <span>ENG</span>
          <span>IN</span>
        </div>
        <svg viewBox="0 0 20 16" className="mt-[21px] ml-[22px] h-4 w-5" fill="none" stroke="#fff" strokeWidth="1.600">
          <path d="M.8 5.800C6 .3 14 .3 19.200 5.800M3.600 8.600c3.700-3.800 9.100-3.800 12.800 0M6.400 11.300c2.100-2.200 5.100-2.200 7.200 0" />
          <circle cx="10" cy="13.500" r="1.200" fill="#fff" />
        </svg>
        <svg viewBox="0 0 20 16" className="mt-[21px] ml-2.5 h-4 w-5" fill="none" stroke="#fff" strokeWidth="1.400">
          <path d="M.8 5.500h3L8 1.500v13l-4.200-4h-3zM10.700 5c1.500 2 1.500 4 0 6M13.300 3c2.700 3 2.700 7 0 10" />
          <path d="M16 1c4 4.500 4 9.500 0 14" stroke="#666" />
        </svg>
        <svg viewBox="0 0 20 14" className="mt-[22px] ml-2.5 h-3.5 w-5" fill="none" stroke="#fff" strokeWidth="1.400">
          <rect x=".7" y=".7" width="16.300" height="12.300" rx="3" />
          <rect x="3" y="3" width="6" height="7.700" rx="1" fill="#fff" stroke="none" />
          <path d="M18.500 5v4" strokeWidth="2" />
        </svg>
        <div className="ml-[19px] flex w-[64px] flex-col items-end pt-2 whitespace-nowrap">
          <span>10:02 AM</span>
          <span>7/3/2025</span>
        </div>
      </div>
    </footer>
  );
}

export default function App() {
  return (
    <div className="flex h-[1080px] w-[1920px] flex-col overflow-hidden font-['Open_Sans','Noto_Sans',sans-serif]">
      <Chrome />
      <div className="relative flex h-[869px] flex-col bg-[linear-gradient(135deg,#39839b_0%,#4a74c0_50%,#1e3c72_100%)]">
        <Navbar />
        <div className="flex min-h-0 flex-1">
          <Sidebar />
          <main className="flex-1 p-5">
            <Projects />
          </main>
        </div>
        <div className="absolute bottom-0 left-0 z-20 flex h-[27px] w-[252px] items-center rounded-tr-[5px] bg-[#1f2220] pl-[5px] text-[15px] tracking-[-0.36px] text-[#c7c7c7]">
          localhost:5173/admin/view-projects
        </div>
      </div>
      <Taskbar />
    </div>
  );
}
